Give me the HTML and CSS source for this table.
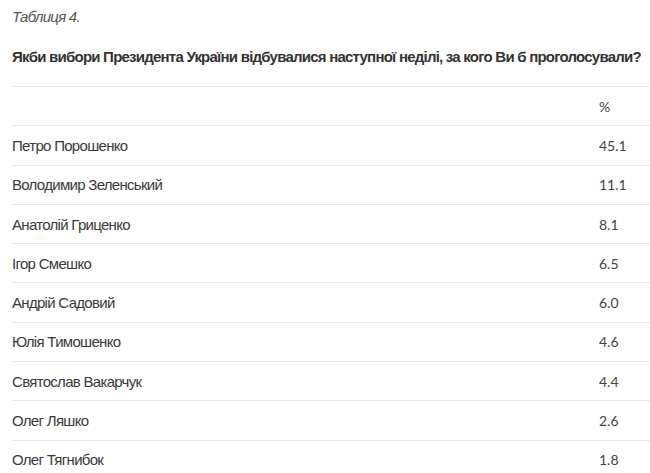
FILE: index.html
```html
<!DOCTYPE html>
<html lang="uk">
<head>
<meta charset="utf-8">
<link rel="stylesheet" href="styles.css">
</head>
<body>
<div class="page">
  <p class="caption">Таблиця 4.</p>
  <p class="question">Якби вибори Президента України відбувалися наступної неділі, за кого Ви б проголосували?</p>
  <table class="results">
    <tr class="head"><td class="name"></td><td class="val">%</td></tr>
    <tr><td class="name">Петро Порошенко</td><td class="val">45.1</td></tr>
    <tr><td class="name">Володимир Зеленський</td><td class="val">11.1</td></tr>
    <tr><td class="name">Анатолій Гриценко</td><td class="val">8.1</td></tr>
    <tr><td class="name">Ігор Смешко</td><td class="val">6.5</td></tr>
    <tr><td class="name">Андрій Садовий</td><td class="val">6.0</td></tr>
    <tr><td class="name">Юлія Тимошенко</td><td class="val">4.6</td></tr>
    <tr><td class="name">Святослав Вакарчук</td><td class="val">4.4</td></tr>
    <tr><td class="name">Олег Ляшко</td><td class="val">2.6</td></tr>
    <tr><td class="name">Олег Тягнибок</td><td class="val">1.8</td></tr>
  </table>
</div>
</body>
</html>
```
FILE: styles.css
```css
html, body {
  margin: 0;
  padding: 0;
  background: #fff;
}
.page {
  padding: 0 0 0 12px;
  font-family: "Liberation Sans", Arial, sans-serif;
  color: #333;
}
.caption {
  margin: 0;
  padding-top: 8px;
  font-style: italic;
  font-size: 15px;
  letter-spacing: -0.75px;
  line-height: 18px;
  color: #555;
}
.question {
  margin: 22px 0 0 0;
  font-weight: bold;
  font-size: 15px;
  letter-spacing: -0.77px;
  line-height: 18px;
  white-space: nowrap;
  color: #333;
}
.results {
  margin-top: 20px;
  width: 100%;
  border-collapse: collapse;
  border-top: 1px solid #e8e8e8;
}
.results td {
  height: 38.3px;
  padding: 0;
  border-bottom: 1px solid #e8e8e8;
  vertical-align: middle;
}
.results .name {
  font-size: 15px;
  letter-spacing: -0.7px;
  color: #3a3a3a;
}
.results .val {
  width: 51px;
  font-family: Lato, "Liberation Sans", sans-serif;
  font-size: 14px;
  color: #444;
}
```
